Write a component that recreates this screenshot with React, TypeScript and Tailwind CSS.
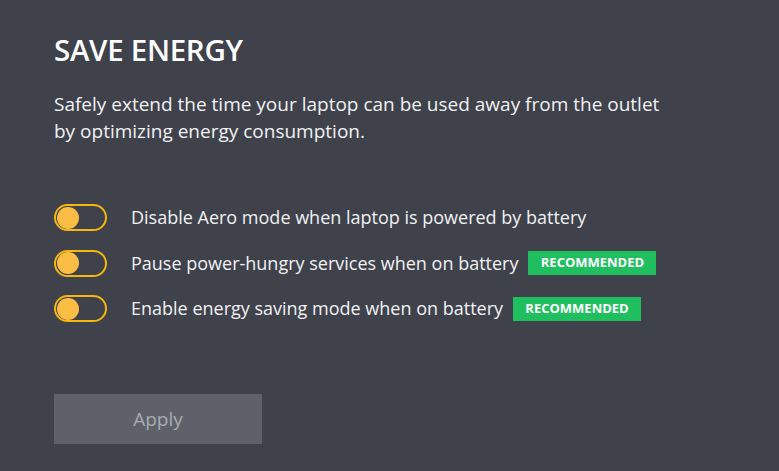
const OPTIONS = [
  { label: 'Disable Aero mode when laptop is powered by battery', recommended: false },
  { label: 'Pause power-hungry services when on battery', recommended: true },
  { label: 'Enable energy saving mode when on battery', recommended: true },
];

function Toggle() {
  return (
    <div className="w-[53px] h-[27px] rounded-full border-[2.5px] border-[#f5b70d] flex items-center pl-[0.5px] shrink-0">
      <span className="w-[22px] h-[22px] rounded-full bg-[#fcbd45]" />
    </div>
  );
}

export default function App() {
  return (
    <div
      className="w-[779px] h-[471px] bg-[#3f414b] text-white overflow-hidden"
      style={{ fontFamily: '"Open Sans", "Noto Sans", sans-serif' }}
    >
      <div className="pl-[54px] pt-[32px]">
        <h1 className="text-[29.5px] font-semibold leading-[36px] tracking-[-0.3px]">SAVE ENERGY</h1>
        <p className="mt-[23px] text-[19px] leading-[27px] text-[#f1f1f2] w-[680px]">
          Safely extend the time your laptop can be used away from the outlet
          <br />
          by optimizing energy consumption.
        </p>

        <div className="mt-[59px] flex flex-col gap-[18.5px]">
          {OPTIONS.map((o) => (
            <div key={o.label} className="flex items-center h-[27px]">
              <Toggle />
              <span className="ml-[24px] text-[18px] text-[#f1f1f2]">{o.label}</span>
              {o.recommended && (
                <span className="ml-[10px] h-[24px] w-[128px] flex items-center justify-center bg-[#1fbf5f] text-[13px] font-bold text-white">
                  RECOMMENDED
                </span>
              )}
            </div>
          ))}
        </div>

        <button className="mt-[72px] w-[208px] h-[50px] bg-[#5e6169] text-[#a8abb1] text-[19px]">
          Apply
        </button>
      </div>
    </div>
  );
}
